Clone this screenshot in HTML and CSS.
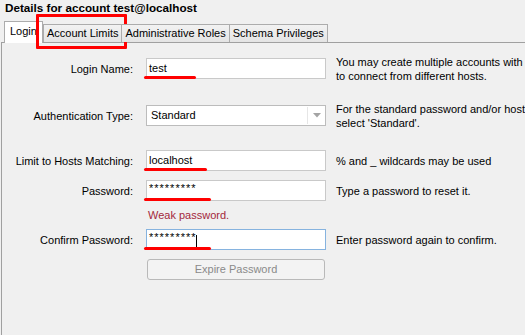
FILE: index.html
```html
<!DOCTYPE html>
<html lang="en">
<head>
    <meta charset="UTF-8">
    <title>Details for account test@localhost</title>
    <link rel="stylesheet" href="styles.css">
</head>
<body>
    <div class="title">Details for account test@localhost</div>
    <div class="tabs">
        <div class="tab active">Login</div>
        <div class="tab">Account Limits<span class="callout"></span></div>
        <div class="tab">Administrative Roles</div>
        <div class="tab">Schema Privileges</div>
    </div>
    <div class="panel">
        <div class="row row-login">
            <div class="label">Login Name:</div>
            <div class="input">test<span class="mark" style="width:52px"></span></div>
            <div class="desc">You may create multiple accounts with the same name<br>to connect from different hosts.</div>
        </div>
        <div class="row row-auth">
            <div class="label">Authentication Type:</div>
            <div class="input select">
                <span class="select-text">Standard</span>
                <span class="select-btn">
                    <svg width="8" height="5" viewBox="0 0 8 5"><path d="M0 0h8L4 4.5z" fill="#a4a4a4"/></svg>
                </span>
            </div>
            <div class="desc">For the standard password and/or host based authentication,<br>select 'Standard'.</div>
        </div>
        <div class="row row-hosts">
            <div class="label">Limit to Hosts Matching:</div>
            <div class="input">localhost<span class="mark" style="width:63px"></span></div>
            <div class="desc">% and _ wildcards may be used</div>
        </div>
        <div class="row row-pass">
            <div class="label">Password:</div>
            <div class="input stars">*********<span class="mark" style="width:67px"></span></div>
            <div class="desc">Type a password to reset it.</div>
        </div>
        <div class="row row-weak">
            <div class="label"></div>
            <div class="weak">Weak password.</div>
        </div>
        <div class="row row-confirm">
            <div class="label">Confirm Password:</div>
            <div class="input stars focus">*********<span class="caret"></span><span class="mark" style="width:67px"></span></div>
            <div class="desc">Enter password again to confirm.</div>
        </div>
        <div class="row row-button">
            <div class="label"></div>
            <div class="btn">Expire Password</div>
        </div>
    </div>
</body>
</html>
```

FILE: styles.css
```css
/* General Styling */
body {
    margin: 0;
    width: 525px;
    height: 335px;
    overflow: hidden;
    background-color: #f0f0f0;
    color: #000000;
    font-family: "Liberation Sans", Arial, sans-serif;
    font-size: 11px;
}

.title {
    height: 14px;
    padding: 1px 0 0 5px;
    font-size: 11.7px;
    font-weight: bold;
    line-height: 14px;
}

/* Tabs */
.tabs {
    display: flex;
    align-items: flex-end;
    height: 27px;
    padding-left: 4px;
    position: relative;
    z-index: 2;
}

.tab {
    position: relative;
    height: 17px;
    padding: 0 3px;
    line-height: 17px;
    border: 1px solid #acacac;
    border-bottom: none;
    background: linear-gradient(#f2f2f2, #e4e4e4);
    margin-left: -1px;
    white-space: nowrap;
}

.tab.active {
    height: 21px;
    line-height: 19px;
    padding: 0 5px;
    margin: 0 1px -1px 0;
    background: #ffffff;
}

.callout {
    position: absolute;
    left: -8px;
    top: -11px;
    width: 91px;
    height: 35px;
    box-sizing: border-box;
    border: 3px solid #ff0000;
    border-radius: 1px;
}

/* Panel */
.panel {
    margin-left: 1px;
    height: 300px;
    border-top: 1px solid #a0a0a0;
    border-left: 1px solid #a0a0a0;
    background-color: #f0f0f0;
}

.row {
    display: flex;
    align-items: center;
    height: 21px;
}

.row-login { margin-top: 15px; }
.row-auth { margin-top: 26px; }
.row-hosts { margin-top: 24px; }
.row-pass { margin-top: 9px; }
.row-weak { margin-top: 7px; height: 14px; }
.row-confirm { margin-top: 7px; }
.row-button { margin-top: 9px; }

.label {
    flex: 0 0 131px;
    text-align: right;
    white-space: nowrap;
}

.input {
    position: relative;
    flex: 0 0 180px;
    box-sizing: border-box;
    height: 21px;
    margin-left: 13px;
    padding-left: 2px;
    border: 1px solid #c9c9c9;
    background-color: #ffffff;
    line-height: 19px;
    white-space: nowrap;
}

.input.focus {
    border-color: #86b3df;
}

.stars {
    letter-spacing: 1px;
    line-height: 15px;
}

.caret {
    display: inline-block;
    width: 1px;
    height: 13px;
    margin-left: -1px;
    vertical-align: -7px;
    background-color: #000000;
}

.select {
    display: flex;
    padding-left: 4px;
    border-color: #bcbcbc;
}

.select-text {
    flex: 1;
}

.select-btn {
    display: flex;
    align-items: center;
    justify-content: center;
    width: 17px;
    margin: 1px 0;
    border-left: 1px solid #e6e6e6;
}

.mark {
    position: absolute;
    left: -3px;
    top: 17px;
    height: 3px;
    border-radius: 2px;
    background-color: #ff0000;
}

.desc {
    margin-left: 10px;
    line-height: 14px;
    white-space: nowrap;
}

.weak {
    margin-left: 15px;
    color: #a3283c;
    line-height: 14px;
}

.btn {
    flex: 0 0 178px;
    box-sizing: border-box;
    height: 21px;
    margin-left: 14px;
    border: 1px solid #b9b9b9;
    border-radius: 3px;
    background-color: #f3f3f3;
    color: #8a8a8a;
    text-align: center;
    line-height: 19px;
}
```
